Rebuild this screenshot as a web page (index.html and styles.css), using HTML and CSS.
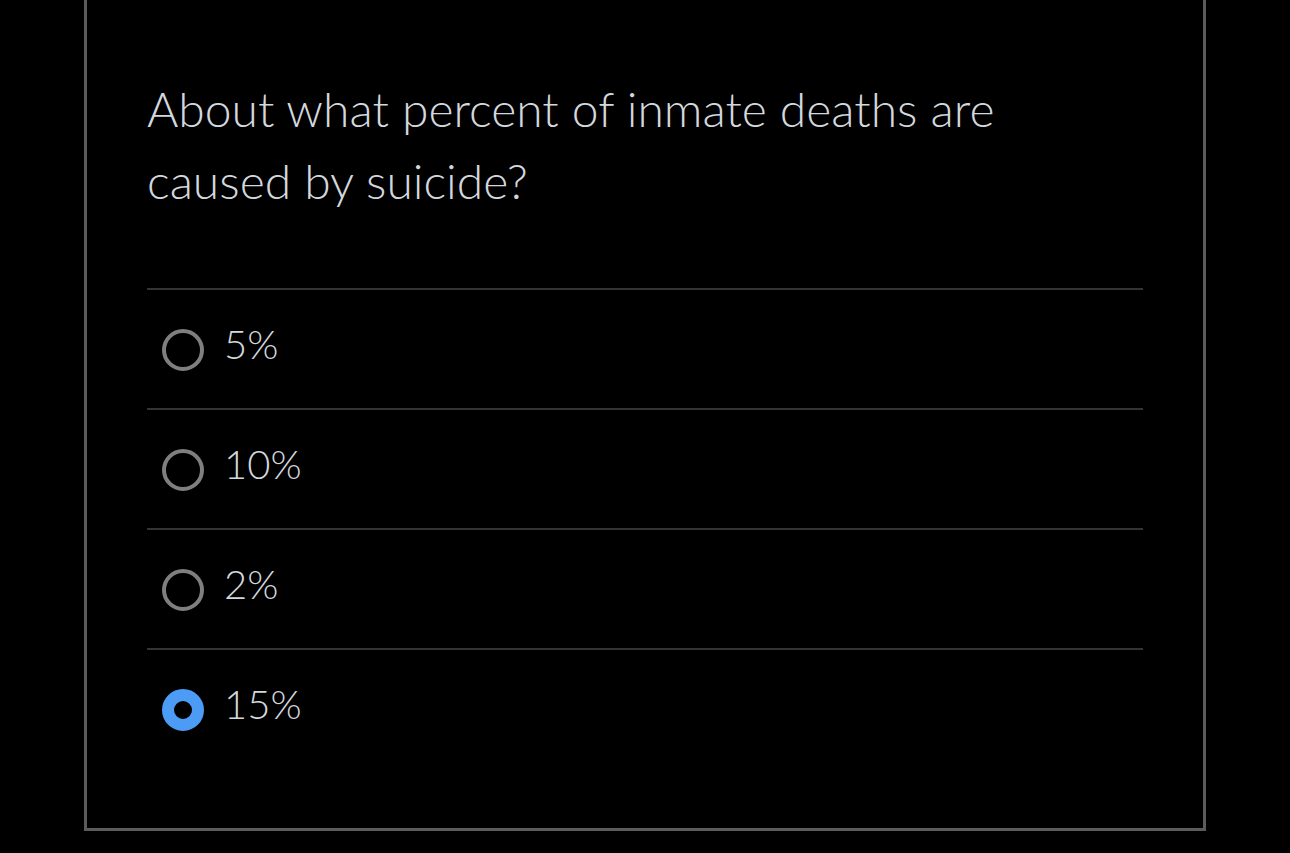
FILE: index.html
```html
<!DOCTYPE html>
<html lang="en">
<head>
<meta charset="utf-8">
<title>Quiz</title>
<link rel="stylesheet" href="styles.css">
</head>
<body>
<div class="card">
  <p class="question">About what percent of inmate deaths are caused by suicide?</p>
  <ul class="options">
    <li class="option"><span class="radio"></span><span class="label">5%</span></li>
    <li class="option"><span class="radio"></span><span class="label">10%</span></li>
    <li class="option"><span class="radio"></span><span class="label">2%</span></li>
    <li class="option"><span class="radio checked"></span><span class="label">15%</span></li>
  </ul>
</div>
</body>
</html>
```
FILE: styles.css
```css
html, body {
  margin: 0;
  padding: 0;
  background: #000;
}
body {
  font-family: Lato, "Open Sans", sans-serif;
  font-weight: 300;
  color: #d3d8de;
  height: 853px;
  overflow: hidden;
}
.card {
  box-sizing: border-box;
  margin-left: 84px;
  width: 1122px;
  height: 831px;
  border: 3px solid #5b5b5b;
  border-top: none;
  padding: 73px 60px 0 60px;
}
.question {
  margin: 0 0 71px 0;
  font-size: 48px;
  line-height: 72px;
  max-width: 900px;
}
.options {
  list-style: none;
  margin: 0;
  padding: 0;
}
.option {
  display: flex;
  align-items: center;
  gap: 20px;
  height: 118px;
  border-top: 2px solid #333;
  padding-left: 15px;
}
.radio {
  box-sizing: border-box;
  width: 42px;
  height: 42px;
  border-radius: 50%;
  border: 4px solid #7f7f7f;
  flex: none;
  margin-top: 2px;
}
.radio.checked {
  border: 12px solid #4c9cf6;
  background: #000;
}
.label {
  font-size: 40px;
  font-weight: 300;
  line-height: 48px;
  margin-bottom: 10px;
}
```
